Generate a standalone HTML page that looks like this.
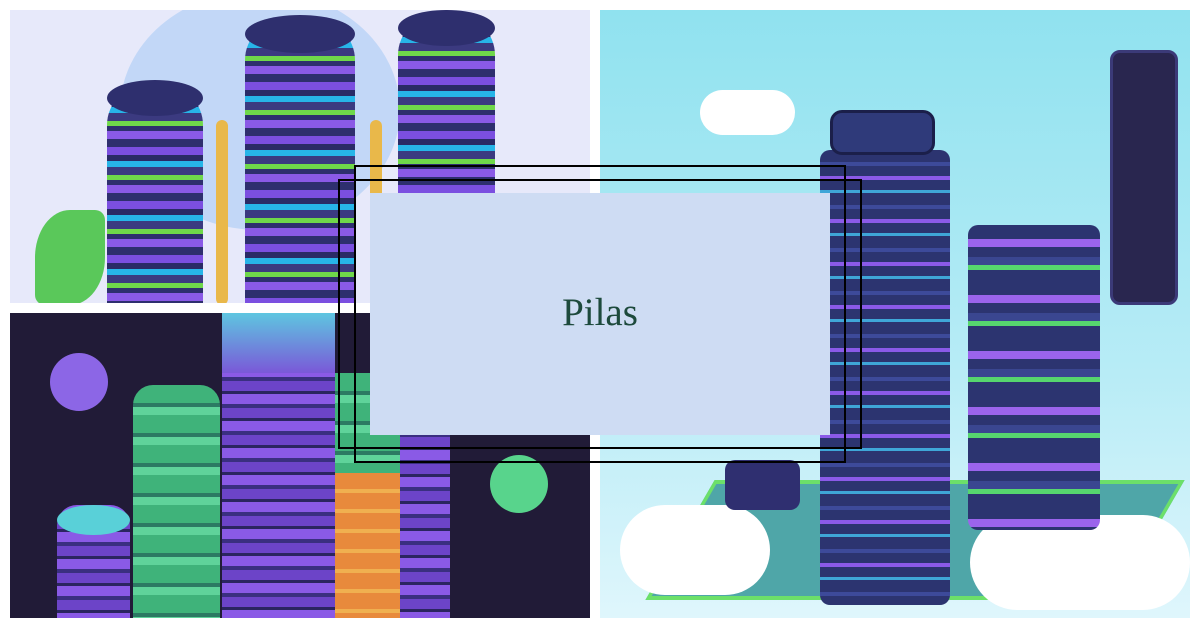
<!DOCTYPE html>
<html><head><meta charset="utf-8"><style>
*{margin:0;padding:0;box-sizing:border-box}
body{width:1200px;height:628px;background:#fff;position:relative;overflow:hidden;font-family:"Liberation Serif",serif}
.a{position:absolute}
.st1{background:repeating-linear-gradient(180deg,#2e2f6e 0 8px,#7b4fe0 8px 16px,#2a2b66 16px 22px,#27b5e8 22px 28px,#3b3a80 28px 36px,#6fd84a 36px 41px,#2e2f6e 41px 46px,#8a5ae6 46px 54px)}
.st2{background:repeating-linear-gradient(180deg,#8a5ae6 0 10px,#3a2f80 10px 14px,#6c44c8 14px 24px,#2b2560 24px 27px)}
.st3{background:repeating-linear-gradient(180deg,#3fb37a 0 18px,#2c7a63 18px 22px,#5fd39a 22px 30px)}
.st4{background:repeating-linear-gradient(180deg,#2c3470 0 12px,#3d4a9a 12px 16px,#2c3470 16px 26px,#8b5ae8 26px 30px,#2c3470 30px 40px,#3fa6d8 40px 43px)}
.st5{background:repeating-linear-gradient(180deg,#2c3470 0 14px,#9b64ec 14px 22px,#2c3470 22px 32px,#3a4690 32px 40px,#56d66e 40px 45px,#2c3470 45px 56px)}
</style></head><body>
<div class="a" style="left:10px;top:10px;width:580px;height:293px;background:#e7e9fa;overflow:hidden">
 <div class="a" style="left:110px;top:-20px;width:280px;height:240px;border-radius:50%;background:#c2d7f7"></div>
 <div class="a st1" style="left:97px;top:75px;width:96px;height:220px;border-radius:40px 40px 0 0"></div>
 <div class="a" style="left:97px;top:70px;width:96px;height:36px;border-radius:48px/18px;background:#2e2f6e"></div>
 <div class="a st1" style="left:235px;top:10px;width:110px;height:285px;border-radius:40px 40px 0 0"></div>
 <div class="a" style="left:235px;top:5px;width:110px;height:38px;border-radius:55px/19px;background:#2e2f6e"></div>
 <div class="a st1" style="left:388px;top:5px;width:97px;height:290px;border-radius:40px 40px 0 0"></div>
 <div class="a" style="left:388px;top:0;width:97px;height:36px;border-radius:48px/18px;background:#2e2f6e"></div>
 <div class="a" style="left:206px;top:110px;width:12px;height:185px;border-radius:6px;background:#e9b84a"></div>
 <div class="a" style="left:360px;top:110px;width:12px;height:185px;border-radius:6px;background:#e9b84a"></div>
 <div class="a" style="left:25px;top:200px;width:70px;height:95px;border-radius:50% 10px;background:#5ac85a"></div>
</div>
<div class="a" style="left:10px;top:313px;width:580px;height:305px;background:#211b37;overflow:hidden">
 <div class="a" style="left:40px;top:40px;width:58px;height:58px;border-radius:50%;background:#8c66e6"></div>
 <div class="a" style="left:480px;top:142px;width:58px;height:58px;border-radius:50%;background:#58d48c"></div>
 <div class="a st2" style="left:47px;top:192px;width:73px;height:113px;border-radius:20px 20px 0 0"></div>
 <div class="a" style="left:47px;top:192px;width:73px;height:30px;border-radius:36px/15px;background:#59d0d8"></div>
 <div class="a st3" style="left:123px;top:72px;width:87px;height:233px;border-radius:20px 20px 0 0"></div>
 <div class="a st2" style="left:212px;top:0;width:113px;height:305px"></div>
 <div class="a" style="left:212px;top:0;width:113px;height:60px;background:linear-gradient(#5ec6e0,#7a58d8)"></div>
 <div class="a" style="left:325px;top:60px;width:65px;height:245px;background:repeating-linear-gradient(180deg,#e88a3c 0 16px,#f0b050 16px 20px);"></div>
 <div class="a st3" style="left:325px;top:60px;width:65px;height:100px"></div>
 <div class="a st2" style="left:390px;top:110px;width:50px;height:195px"></div>
</div>
<div class="a" style="left:600px;top:10px;width:590px;height:608px;background:linear-gradient(180deg,#90e2ef,#b8ecf6 60%,#dff6fc);overflow:hidden">
 <div class="a" style="left:510px;top:40px;width:68px;height:255px;border-radius:10px;background:#29264f;border:3px solid #3b3a78"></div>
 <div class="a" style="left:100px;top:80px;width:95px;height:45px;border-radius:25px;background:#fff"></div>
 <div class="a" style="left:80px;top:470px;width:470px;height:120px;background:#4fa6a8;transform:skewX(-30deg);border:4px solid #6ce06a"></div>
 <div class="a" style="left:20px;top:495px;width:150px;height:90px;border-radius:45px;background:#fff"></div>
 <div class="a" style="left:370px;top:505px;width:220px;height:95px;border-radius:48px;background:#fff"></div>
 <div class="a st4" style="left:220px;top:140px;width:130px;height:455px;border-radius:10px"></div>
 <div class="a" style="left:230px;top:100px;width:105px;height:45px;border-radius:12px;background:#2f3a7a;border:3px solid #1b1f4a"></div>
 <div class="a st5" style="left:368px;top:215px;width:132px;height:305px;border-radius:10px"></div>
 <div class="a" style="left:125px;top:450px;width:75px;height:50px;border-radius:10px;background:#2f2f70"></div>
</div>
<div class="a" style="left:370px;top:193px;width:460px;height:242px;background:#cedcf3"></div>
<div class="a" style="left:338px;top:179px;width:524px;height:270px;border:2px solid #000"></div>
<div class="a" style="left:354px;top:165px;width:492px;height:298px;border:2px solid #000"></div>
<div class="a" style="left:370px;top:289px;width:460px;text-align:center;font-size:39px;line-height:48px;color:#1d4a3c">Pilas</div>
</body></html>
